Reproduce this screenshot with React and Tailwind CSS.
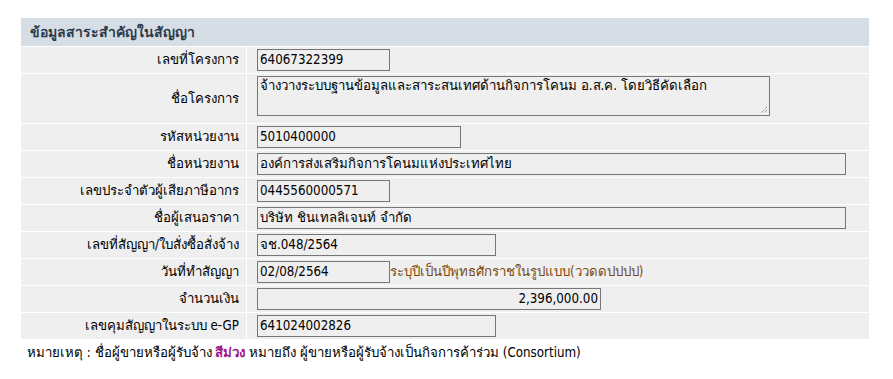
import React from "react";

const rows = [
  { label: "เลขที่โครงการ", value: "64067322399", w: "w-[133px]" },
  { label: "ชื่อโครงการ", value: "จ้างวางระบบฐานข้อมูลและสาระสนเทศด้านกิจการโคนม อ.ส.ค. โดยวิธีคัดเลือก", textarea: true },
  { label: "รหัสหน่วยงาน", value: "5010400000", w: "w-[204px]" },
  { label: "ชื่อหน่วยงาน", value: "องค์การส่งเสริมกิจการโคนมแห่งประเทศไทย", w: "w-[589px]" },
  { label: "เลขประจำตัวผู้เสียภาษีอากร", value: "0445560000571", w: "w-[133px]" },
  { label: "ชื่อผู้เสนอราคา", value: "บริษัท ชินเทลลิเจนท์ จำกัด", w: "w-[589px]" },
  { label: "เลขที่สัญญา/ใบสั่งซื้อสั่งจ้าง", value: "จช.048/2564", w: "w-[239px]" },
  { label: "วันที่ทำสัญญา", value: "02/08/2564", w: "w-[133px]", hint: "ระบุปีเป็นปีพุทธศักราชในรูปแบบ(ววดดปปปป)" },
  { label: "จำนวนเงิน", value: "2,396,000.00", w: "w-[344px]", right: true },
  { label: "เลขคุมสัญญาในระบบ e-GP", value: "641024002826", w: "w-[239px]" },
];

export default function App() {
  return (
    <div className="bg-white w-[893px] h-[379px] pt-[18px] pl-[21px] text-[13.25px] text-black font-stretch-condensed" style={{ fontFamily: "Tahoma, 'DejaVu Sans Condensed', 'DejaVu Sans', sans-serif" }}>
      <div className="w-[848px] bg-white flex flex-col gap-px">
        <div className="h-[28px] bg-[#d6dde5] flex items-center pl-[9px] font-bold text-[14px] text-[#2d3b4a]">ข้อมูลสาระสำคัญในสัญญา</div>
        {rows.map((r, i) => (
          <div key={i} className="flex gap-px">
            <div className="w-[225px] shrink-0 bg-[#efefef] flex items-center justify-end pr-[7px]">{r.label}</div>
            <div className={`flex-1 bg-[#efefef] pl-[10px] flex ${r.textarea ? "h-[49px] items-start pt-[2px]" : "h-[26px] items-center"}`}>
              {r.textarea ? (
                <div className="relative w-[513px] h-[40px] border border-[#767676] px-[2px] pt-[1px] leading-[16px]">
                  {r.value}
                  <svg className="absolute right-[1px] bottom-[1px]" width="9" height="9" viewBox="0 0 9 9">
                    <path d="M8 2 L2 8 M8 5 L5 8" stroke="#777" strokeWidth="1" strokeDasharray="1 1" />
                  </svg>
                </div>
              ) : (
                <div className={`${r.w} h-[22px] border border-[#767676] px-[2px] flex items-center ${r.right ? "justify-end" : ""}`}>{r.value}</div>
              )}
              {r.hint && <span className="text-[#7a4a10]">{r.hint}</span>}
            </div>
          </div>
        ))}
      </div>
      <div className="mt-[5px] pl-[6px] leading-[18px]">
        หมายเหตุ : ชื่อผู้ขายหรือผู้รับจ้าง <span className="text-[#a0148c] font-bold">สีม่วง</span> หมายถึง ผู้ขายหรือผู้รับจ้างเป็นกิจการค้าร่วม (Consortium)
      </div>
    </div>
  );
}
